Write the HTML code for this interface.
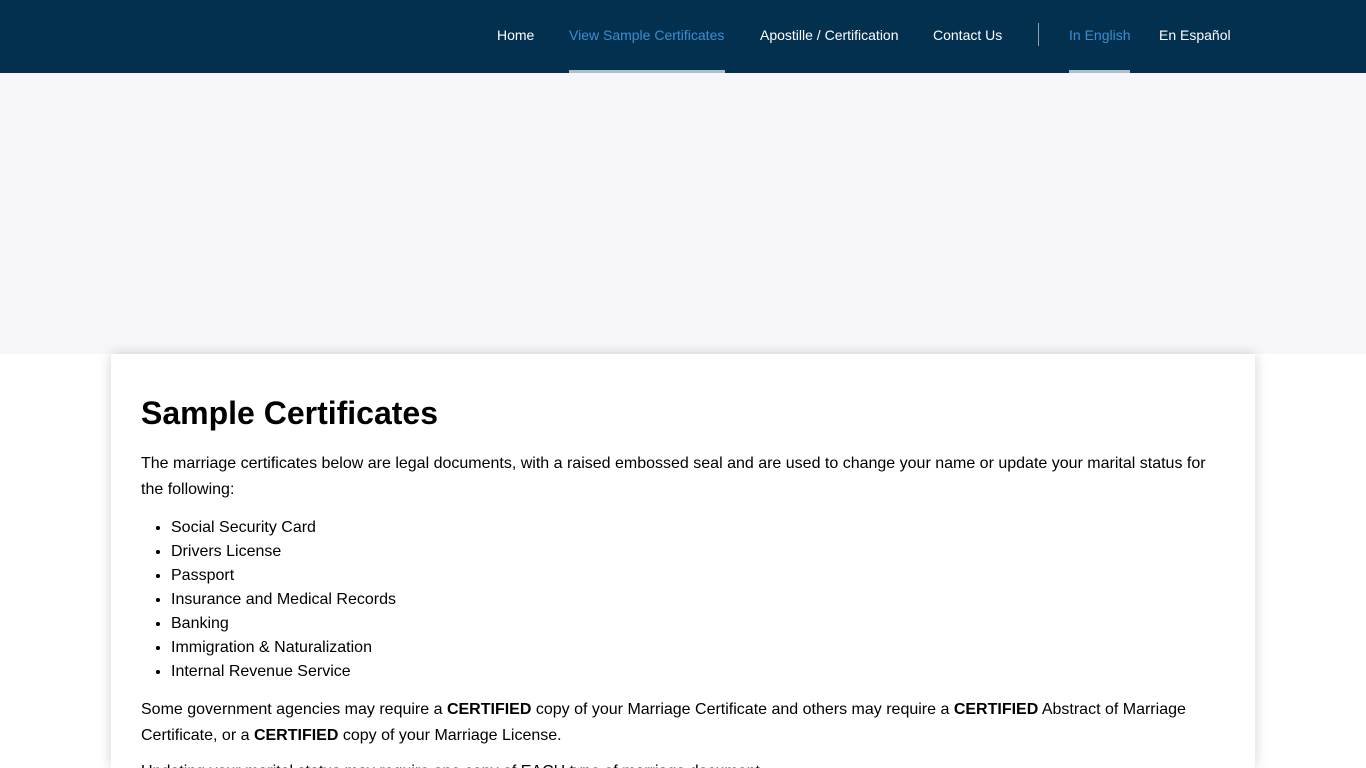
<!DOCTYPE html>
<html><head><meta charset="utf-8"><style>
*{margin:0;padding:0;box-sizing:border-box}
html,body{width:1366px;height:768px;overflow:hidden}
body{background:#fff;font-family:"Liberation Sans",Arial,sans-serif;color:#000;position:relative}
.hdr{height:73px;background:#03304f;position:relative}
.hdr a{position:absolute;top:27px;font-size:14px;color:#fff;text-decoration:none;line-height:16px}
.hdr a.act{color:#3a8fd0}
.bar{position:absolute;top:70px;height:3px;background:#a9c0d0}
.sep{position:absolute;left:1038px;top:23px;width:1px;height:23px;background:#8da2b3}
.band{height:281px;background:#f7f7fb}
.card{position:absolute;left:111px;top:354px;width:1144px;height:414px;overflow:hidden;background:#fff;box-shadow:0 0 12px rgba(0,0,0,.18);padding:40px 30px}
h1{font-size:32px;font-weight:bold;line-height:38px;margin-bottom:19px}
p{font-size:16px;line-height:26px}
ul{margin:13px 0 13px 30px;font-size:16px;line-height:24px}
</style></head><body>
<div class="hdr">
<a style="left:497px">Home</a>
<a class="act" style="left:569px">View Sample Certificates</a>
<div class="bar" style="left:569px;width:156px"></div>
<a style="left:760px">Apostille / Certification</a>
<a style="left:933px">Contact Us</a>
<div class="sep"></div>
<a class="act" style="left:1069px">In English</a>
<div class="bar" style="left:1069px;width:61px"></div>
<a style="left:1159px">En Español</a>
</div>
<div class="band"></div>
<div class="card">
<h1>Sample Certificates</h1>
<p>The marriage certificates below are legal documents, with a raised embossed seal and are used to change your name or update your marital status for the following:</p>
<ul><li>Social Security Card</li><li>Drivers License</li><li>Passport</li><li>Insurance and Medical Records</li><li>Banking</li><li>Immigration &amp; Naturalization</li><li>Internal Revenue Service</li></ul>
<p>Some government agencies may require a <b>CERTIFIED</b> copy of your Marriage Certificate and others may require a <b>CERTIFIED</b> Abstract of Marriage Certificate, or a <b>CERTIFIED</b> copy of your Marriage License.</p>
<p style="margin-top:10px">Updating your marital status may require one copy of EACH type of marriage document.</p>
</div>
</body></html>
